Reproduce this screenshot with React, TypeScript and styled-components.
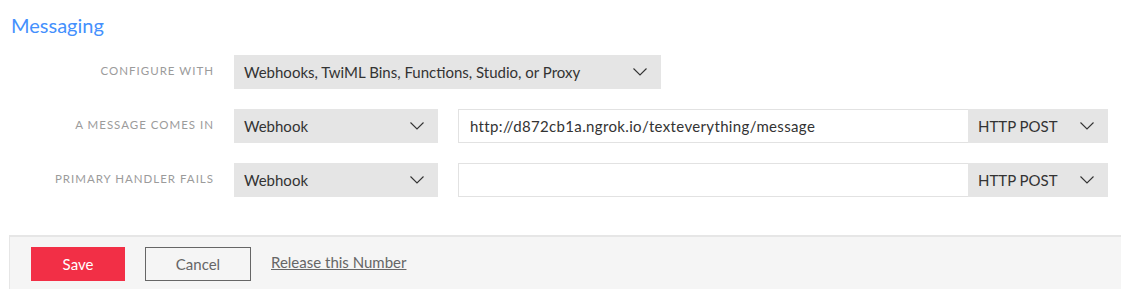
import styled, { createGlobalStyle } from "styled-components";

const GlobalStyle = createGlobalStyle`
  body {
    margin: 0;
    background: #ffffff;
    font-family: Lato, "Open Sans", sans-serif;
  }
`;

const Wrapper = styled.div`
  width: 1121px;
  height: 289px;
  overflow: hidden;
  display: flex;
  flex-direction: column;
`;

const Title = styled.h2`
  margin: 0;
  padding: 13px 0 0 11px;
  height: 42px;
  box-sizing: border-box;
  font-size: 20px;
  font-weight: 400;
  line-height: 24px;
  color: #4490fd;
`;

const Form = styled.div`
  display: flex;
  flex-direction: column;
  gap: 20px;
  padding-top: 13px;
`;

const Row = styled.div`
  display: flex;
  align-items: flex-start;
`;

const Label = styled.div`
  width: 214px;
  padding-top: 9px;
  padding-right: 20px;
  box-sizing: content-box;
  text-align: right;
  font-size: 11.5px;
  line-height: 14px;
  letter-spacing: 1px;
  text-transform: uppercase;
  color: #9b9b9b;
  flex-shrink: 0;
`;

const Select = styled.div<{ width: number }>`
  width: ${(p) => p.width}px;
  height: 34px;
  box-sizing: border-box;
  background: #e5e5e5;
  display: flex;
  align-items: center;
  justify-content: space-between;
  padding: 0 14px 0 10px;
  font-size: 15px;
  color: #333;
  flex-shrink: 0;
`;

const Group = styled.div`
  display: flex;
  margin-left: 20px;
`;

const Input = styled.div`
  width: 510px;
  height: 34px;
  box-sizing: border-box;
  border: 1px solid #e2e2e2;
  border-right: none;
  background: #fff;
  display: flex;
  align-items: center;
  padding-left: 11px;
  font-size: 15px;
  letter-spacing: 0.35px;
  color: #333;
`;

const Footer = styled.div`
  margin-top: 38px;
  margin-left: 9px;
  flex: 1;
  background: #f5f5f5;
  border-top: 2px solid #e6e6e6;
  border-left: 1px solid #e6e6e6;
  display: flex;
  align-items: flex-start;
  gap: 20px;
  padding: 10px 0 0 21px;
`;

const Button = styled.button<{ primary?: boolean }>`
  height: 34px;
  box-sizing: border-box;
  font-family: inherit;
  font-size: 15px;
  cursor: pointer;
  border: 1px solid ${(p) => (p.primary ? "#f22f46" : "#666")};
  background: ${(p) => (p.primary ? "#f22f46" : "transparent")};
  color: ${(p) => (p.primary ? "#fff" : "#666")};
  width: ${(p) => (p.primary ? 94 : 106)}px;
`;

const Link = styled.a`
  font-size: 15px;
  color: #666;
  text-decoration: underline;
  line-height: 34px;
  margin-top: -2px;
`;

const Chevron = () => (
  <svg width="14" height="8" viewBox="0 0 14 8" fill="none">
    <path d="M0.5 0.5 L7 7 L13.5 0.5" stroke="#333" strokeWidth="1.1" />
  </svg>
);

function App() {
  return (
    <Wrapper>
      <GlobalStyle />
      <Title>Messaging</Title>
      <Form>
        <Row>
          <Label>Configure with</Label>
          <Select width={427}>
            <span>Webhooks, TwiML Bins, Functions, Studio, or Proxy</span>
            <Chevron />
          </Select>
        </Row>
        <Row>
          <Label>A message comes in</Label>
          <Select width={204}>
            <span>Webhook</span>
            <Chevron />
          </Select>
          <Group>
            <Input>http://d872cb1a.ngrok.io/texteverything/message</Input>
            <Select width={140}>
              <span>HTTP POST</span>
              <Chevron />
            </Select>
          </Group>
        </Row>
        <Row>
          <Label>Primary handler fails</Label>
          <Select width={204}>
            <span>Webhook</span>
            <Chevron />
          </Select>
          <Group>
            <Input />
            <Select width={140}>
              <span>HTTP POST</span>
              <Chevron />
            </Select>
          </Group>
        </Row>
      </Form>
      <Footer>
        <Button primary>Save</Button>
        <Button>Cancel</Button>
        <Link href="#">Release this Number</Link>
      </Footer>
    </Wrapper>
  );
}

export default App;
